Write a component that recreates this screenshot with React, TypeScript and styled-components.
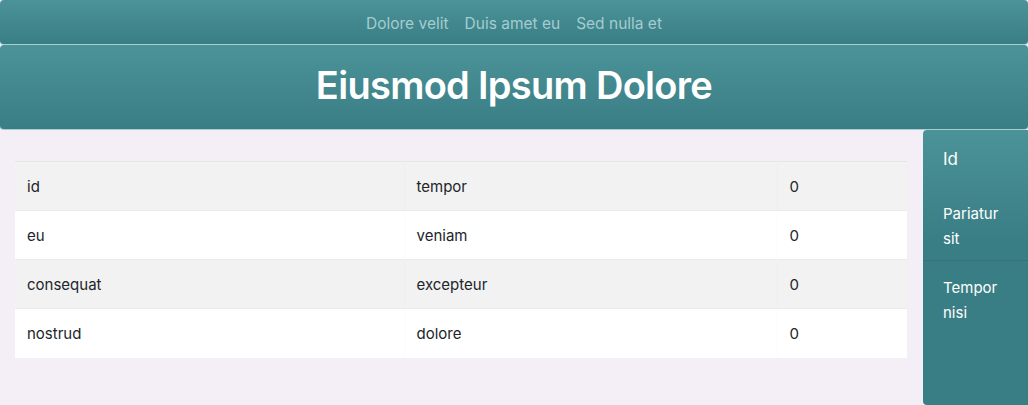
import React from "react";
import styled, { createGlobalStyle } from "styled-components";

const Global = createGlobalStyle`
  html, body { margin: 0; padding: 0; background: #f4eff6; }
  body { font-family: Inter, "Noto Sans", "Liberation Sans", sans-serif; }
  * { box-sizing: border-box; }
`;

const Page = styled.div`
  display: flex;
  flex-direction: column;
  min-height: 405px;
  background: #f4eff6;
`;

const NavBar = styled.nav`
  height: 45px;
  display: flex;
  justify-content: center;
  align-items: center;
  gap: 16px;
  padding-top: 2px;
  background: linear-gradient(#4b9299, #3a7e85);
  border-radius: 4px;
  border-bottom: 1px solid #a7cdd1;
`;

const NavLink = styled.a`
  color: #a3cdd0;
  font-size: 15.5px;
  text-decoration: none;
`;

const Header = styled.header`
  height: 85px;
  display: flex;
  align-items: center;
  justify-content: center;
  background: linear-gradient(#4b9299, #3a7e85);
  border-radius: 4px;
  border-bottom: 1px solid #a7cdd1;
`;

const Title = styled.h1`
  margin: 0 0 4px;
  color: #ffffff;
  font-size: 38px;
  font-weight: 600;
  letter-spacing: -0.7px;
`;

const Body = styled.div`
  flex: 1;
  display: flex;
  align-items: stretch;
  gap: 16px;
`;

const Main = styled.main`
  flex: 1;
  padding: 31px 0 0 15px;
`;

const Table = styled.table`
  width: 892px;
  border-collapse: collapse;
  table-layout: fixed;
  font-size: 15px;
  color: #212529;
  border-top: 1px solid #e6e6e6;
`;

const Row = styled.tr<{ $striped: boolean }>`
  background: ${(p) => (p.$striped ? "#f2f2f2" : "#ffffff")};
  border-bottom: 1px solid #ebebeb;
  &:last-child { border-bottom: none; }
`;

const Cell = styled.td`
  height: 49px;
  padding: 0 12px;
  border-left: 1px solid rgba(0, 0, 0, 0.015);
  &:first-child { border-left: none; }
`;

const Sidebar = styled.aside`
  width: 105px;
  background: linear-gradient(#4b9299, #3a7e85 40%, #3a7e85);
  border-radius: 4px 0 0 4px;
  color: #ffffff;
  display: flex;
  flex-direction: column;
`;

const SideTitle = styled.div`
  font-size: 17px;
  padding: 19px 20px 16px;
`;

const SideItem = styled.div<{ $divider?: boolean }>`
  font-size: 15px;
  line-height: 25px;
  padding: ${(p) => (p.$divider ? "16px 20px 9px" : "14px 20px")};
  ${(p) => (p.$divider ? "border-bottom: 1px solid #367278;" : "")}
`;

const rows = [
  ["id", "tempor", "0"],
  ["eu", "veniam", "0"],
  ["consequat", "excepteur", "0"],
  ["nostrud", "dolore", "0"],
];

export default function App() {
  return (
    <Page>
      <Global />
      <NavBar>
        <NavLink>Dolore velit</NavLink>
        <NavLink>Duis amet eu</NavLink>
        <NavLink>Sed nulla et</NavLink>
      </NavBar>
      <Header>
        <Title>Eiusmod Ipsum Dolore</Title>
      </Header>
      <Body>
        <Main>
          <Table>
            <colgroup>
              <col style={{ width: 389 }} />
              <col style={{ width: 373 }} />
              <col style={{ width: 130 }} />
            </colgroup>
            <tbody>
              {rows.map((r, i) => (
                <Row key={i} $striped={i % 2 === 0}>
                  {r.map((c, j) => (
                    <Cell key={j}>{c}</Cell>
                  ))}
                </Row>
              ))}
            </tbody>
          </Table>
        </Main>
        <Sidebar>
          <SideTitle>Id</SideTitle>
          <SideItem $divider>Pariatur sit</SideItem>
          <SideItem>Tempor nisi</SideItem>
        </Sidebar>
      </Body>
    </Page>
  );
}
